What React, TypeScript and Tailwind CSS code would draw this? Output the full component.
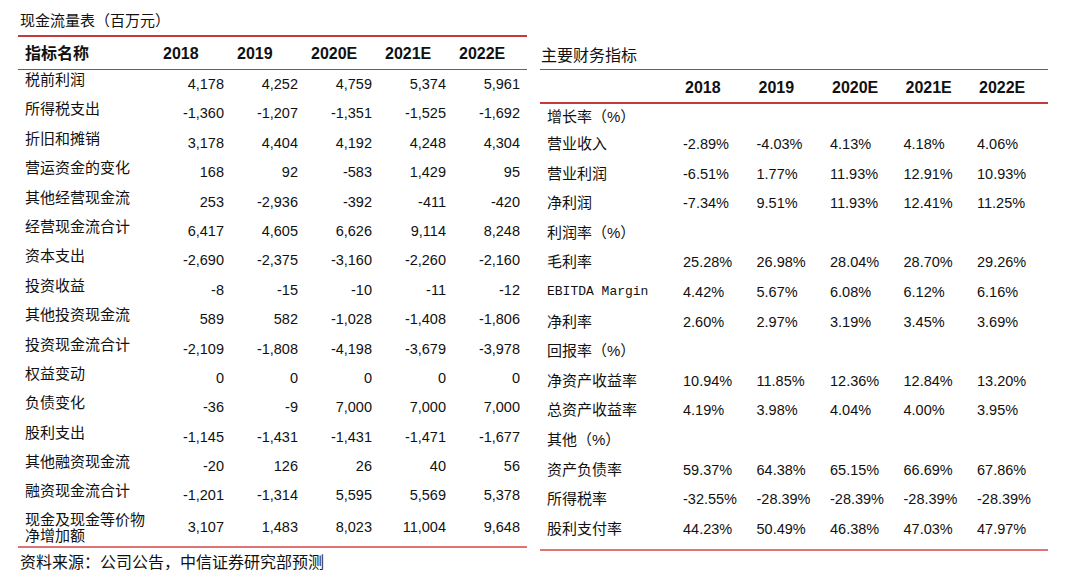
import React from 'react'

const font = "font-['Liberation_Sans','Noto_Sans_CJK_SC',sans-serif]";

const years = ["2018", "2019", "2020E", "2021E", "2022E"];

const cashFlow: [string, string[]][] = [
  ["税前利润", ["4,178", "4,252", "4,759", "5,374", "5,961"]],
  ["所得税支出", ["-1,360", "-1,207", "-1,351", "-1,525", "-1,692"]],
  ["折旧和摊销", ["3,178", "4,404", "4,192", "4,248", "4,304"]],
  ["营运资金的变化", ["168", "92", "-583", "1,429", "95"]],
  ["其他经营现金流", ["253", "-2,936", "-392", "-411", "-420"]],
  ["经营现金流合计", ["6,417", "4,605", "6,626", "9,114", "8,248"]],
  ["资本支出", ["-2,690", "-2,375", "-3,160", "-2,260", "-2,160"]],
  ["投资收益", ["-8", "-15", "-10", "-11", "-12"]],
  ["其他投资现金流", ["589", "582", "-1,028", "-1,408", "-1,806"]],
  ["投资现金流合计", ["-2,109", "-1,808", "-4,198", "-3,679", "-3,978"]],
  ["权益变动", ["0", "0", "0", "0", "0"]],
  ["负债变化", ["-36", "-9", "7,000", "7,000", "7,000"]],
  ["股利支出", ["-1,145", "-1,431", "-1,431", "-1,471", "-1,677"]],
  ["其他融资现金流", ["-20", "126", "26", "40", "56"]],
  ["融资现金流合计", ["-1,201", "-1,314", "5,595", "5,569", "5,378"]],
];

const ratios: [string, string[] | null][] = [
  ["增长率（%）", null],
  ["营业收入", ["-2.89%", "-4.03%", "4.13%", "4.18%", "4.06%"]],
  ["营业利润", ["-6.51%", "1.77%", "11.93%", "12.91%", "10.93%"]],
  ["净利润", ["-7.34%", "9.51%", "11.93%", "12.41%", "11.25%"]],
  ["利润率（%）", null],
  ["毛利率", ["25.28%", "26.98%", "28.04%", "28.70%", "29.26%"]],
  ["EBITDA Margin", ["4.42%", "5.67%", "6.08%", "6.12%", "6.16%"]],
  ["净利率", ["2.60%", "2.97%", "3.19%", "3.45%", "3.69%"]],
  ["回报率（%）", null],
  ["净资产收益率", ["10.94%", "11.85%", "12.36%", "12.84%", "13.20%"]],
  ["总资产收益率", ["4.19%", "3.98%", "4.04%", "4.00%", "3.95%"]],
  ["其他（%）", null],
  ["资产负债率", ["59.37%", "64.38%", "65.15%", "66.69%", "67.86%"]],
  ["所得税率", ["-32.55%", "-28.39%", "-28.39%", "-28.39%", "-28.39%"]],
  ["股利支付率", ["44.23%", "50.49%", "46.38%", "47.03%", "47.97%"]],
];

function RedLine() {
  return <div className="h-[1.5px] bg-[#c23b3b]" />;
}

function BottomLine() {
  return <div className="h-[2px] bg-[#df7474]" />;
}

export default function App() {
  return (
    <div className={`w-[1068px] h-[580px] bg-white text-[#111] ${font} flex`}>
      {/* 现金流量表 */}
      <div className="ml-[18px] w-[509px]">
        <div className="h-[35px] pt-[11px] pl-[2px] text-[15px] leading-[20px]">现金流量表（百万元）</div>
        <RedLine />
        <div className="grid grid-cols-[139px_repeat(5,74px)] h-[32px] pt-[7px] text-[16px] leading-[20px] font-bold">
          <div className="pl-[7px]">指标名称</div>
          {years.map((y) => (
            <div key={y} className="pl-[6px]">{y}</div>
          ))}
        </div>
        <RedLine />
        {cashFlow.map(([label, vals]) => (
          <div key={label} className="grid grid-cols-[139px_repeat(5,74px)] h-[29.4px]">
            <div className="pl-[7px] text-[15px] leading-[20px]">{label}</div>
            {vals.map((v, i) => (
              <div key={i} className="pt-[4px] pr-[7px] text-right text-[14.5px] leading-[20px]">{v}</div>
            ))}
          </div>
        ))}
        <div className="grid grid-cols-[139px_repeat(5,74px)] h-[35px]">
          <div className="pl-[7px] pt-[1px] text-[15px] leading-[16px]">
            现金及现金等价物
            <br />
            净增加额
          </div>
          {["3,107", "1,483", "8,023", "11,004", "9,648"].map((v, i) => (
            <div key={i} className="pt-[6.5px] pr-[7px] text-right text-[14.5px] leading-[20px]">{v}</div>
          ))}
        </div>
        <BottomLine />
        <div className="mt-[5px] pl-[2px] text-[16px] leading-[20px]">资料来源：公司公告，中信证券研究部预测</div>
      </div>

      {/* 主要财务指标 */}
      <div className="ml-[13px] w-[508px]">
        <div className="h-[68.5px] pt-[46px] pl-[1px] text-[16px] leading-[20px]">主要财务指标</div>
        <RedLine />
        <div className="grid grid-cols-[140px_repeat(5,73.5px)] h-[32px] pt-[8px] text-[16px] leading-[20px] font-bold">
          <div />
          {years.map((y) => (
            <div key={y} className="pl-[5px]">{y}</div>
          ))}
        </div>
        <RedLine />
        <div className="pb-[5px]">
          {ratios.map(([label, vals], idx) => (
            <div
              key={label}
              className={`grid grid-cols-[140px_repeat(5,73.5px)] ${idx === 0 ? "h-[25.7px] pt-[3.5px]" : "h-[29.6px] pt-[4.8px]"}`}
            >
              {label === "EBITDA Margin" ? (
                <div className="pl-[7px] font-['Liberation_Mono',monospace] text-[13px] leading-[20px]">{label}</div>
              ) : (
                <div className="pl-[7px] text-[15px] leading-[20px]">{label}</div>
              )}
              {vals &&
                vals.map((v, i) => (
                  <div key={i} className="pl-[3px] text-[14.5px] leading-[20px]">{v}</div>
                ))}
            </div>
          ))}
        </div>
        <BottomLine />
      </div>
    </div>
  )
}
